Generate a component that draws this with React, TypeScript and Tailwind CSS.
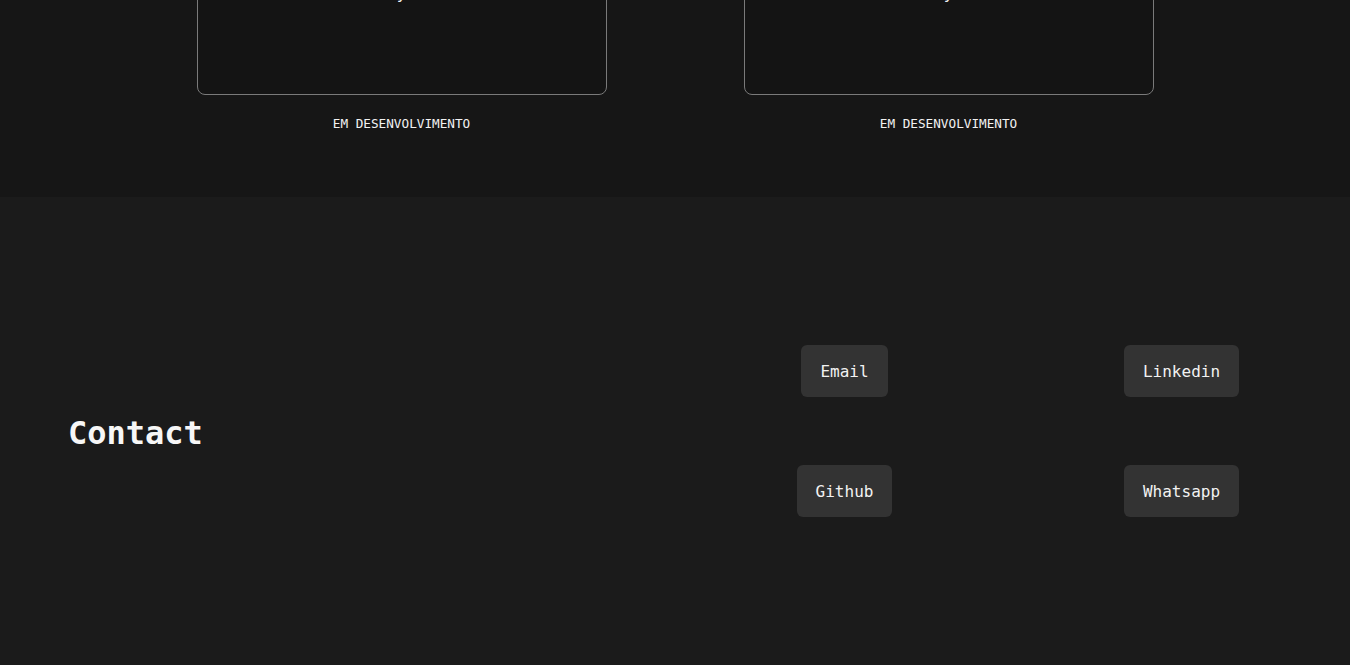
import React from "react";

const mono = { fontFamily: '"DejaVu Sans Mono", "Liberation Mono", monospace' };

function Card() {
  return (
    <div className="flex w-[410px] flex-col items-center">
      <div className="mt-[-206px] flex h-[301px] w-full flex-col items-center rounded-lg border border-[#7a7a7a] bg-[#141414] pt-[189px]">
        <p className="text-[16px] leading-[20px] text-[#f2f2f2]">y</p>
      </div>
      <p className="mt-[21px] text-[12.7px] leading-[16px] text-[#f2f2f2]">EM DESENVOLVIMENTO</p>
    </div>
  );
}

function Btn({ label }: { label: string }) {
  return (
    <button className="flex h-[52px] items-center rounded-md bg-[#333333] px-[19px] pt-[2px] text-[16px] leading-[24px] text-[#f2f2f2]">
      {label}
    </button>
  );
}

export default function App() {
  return (
    <div style={mono} className="min-h-[665px] bg-[#1b1b1b]">
      <section className="flex h-[197px] justify-center gap-[137px] overflow-visible bg-[#161616]">
        <Card />
        <Card />
      </section>
      <section className="grid h-[468px] grid-cols-2 items-center bg-[#1b1b1b]">
        <div className="pl-[68px] pt-[3px]">
          <h2 className="text-[32px] font-bold leading-[40px] text-[#f7f7f7]">Contact</h2>
        </div>
        <div className="grid grid-cols-2 justify-items-center gap-y-[68px] pl-[1px]">
          <Btn label="Email" />
          <Btn label="Linkedin" />
          <Btn label="Github" />
          <Btn label="Whatsapp" />
        </div>
      </section>
    </div>
  );
}
